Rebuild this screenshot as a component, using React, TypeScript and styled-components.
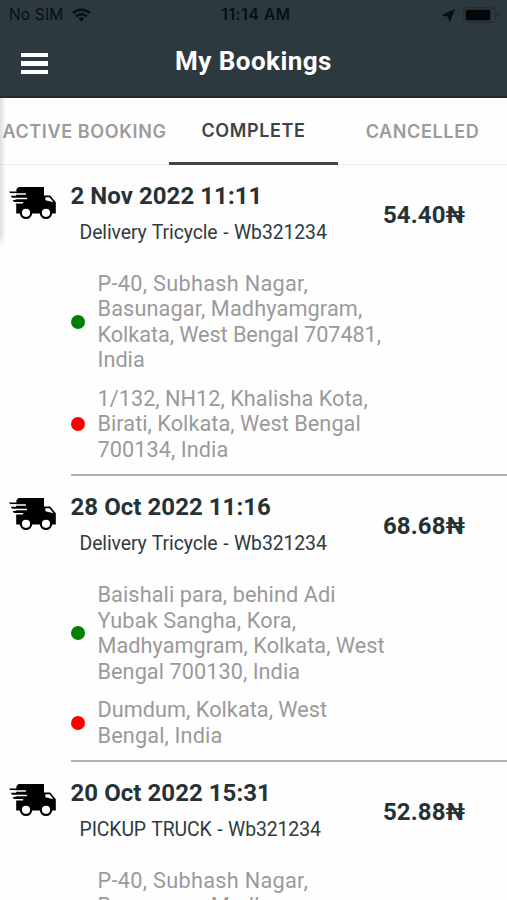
import React from "react";
import styled, { createGlobalStyle } from "styled-components";

const GlobalStyle = createGlobalStyle`
  * { box-sizing: border-box; }
  body { margin: 0; background: #fefefe; font-family: Roboto, "Liberation Sans", sans-serif; }
`;

const Screen = styled.main`
  position: relative;
  width: 507px;
  height: 900px;
  overflow: hidden;
  display: flex;
  flex-direction: column;
  background: #fefefe;
`;

const Header = styled.header`
  height: 98px;
  flex: none;
  background: #2c393f;
  border-bottom: 2px solid #1d2b2e;
`;

const StatusBar = styled.div`
  height: 30px;
  display: grid;
  grid-template-columns: 1fr auto 1fr;
  align-items: center;
  padding: 0 7px 0 9px;
  font-family: Inter, sans-serif;
  font-size: 15.5px;
  line-height: 30px;
  color: #071013;
`;

const Carrier = styled.div`
  display: flex;
  align-items: center;
  gap: 9px;
  letter-spacing: 0.15px;
`;

const Clock = styled.div`
  padding-left: 3px;
  font-weight: 600;
  letter-spacing: 0.65px;
`;

const Indicators = styled.div`
  display: flex;
  align-items: center;
  justify-content: flex-end;
  gap: 8px;
`;

const TitleBar = styled.div`
  height: 66px;
  display: grid;
  grid-template-columns: 1fr auto 1fr;
  align-items: center;
  padding: 0 21px;
`;

const MenuButton = styled.button`
  display: flex;
  flex-direction: column;
  gap: 4px;
  width: 27px;
  padding: 0;
  margin-top: 1px;
  border: 0;
  background: none;
`;

const MenuBar = styled.span`
  height: 4.4px;
  background: #fff;
`;

const Title = styled.h1`
  margin: -5px 0 0;
  font-size: 26px;
  line-height: 32px;
  font-weight: 700;
  color: #fff;
  letter-spacing: 0.45px;
`;

const Tabs = styled.nav`
  height: 67px;
  flex: none;
  display: grid;
  grid-template-columns: repeat(3, 169px);
  border-bottom: 1px solid #f0f0f0;
`;

const Tab = styled.button<{ $active?: boolean }>`
  height: 67px;
  padding: 0;
  padding-top: ${(p) => (p.$active ? "1px" : "2px")};
  border: 0;
  border-bottom: 3px solid ${(p) => (p.$active ? "#404446" : "transparent")};
  background: none;
  font-family: Inter, sans-serif;
  font-size: 18px;
  font-weight: 600;
  letter-spacing: 0.63px;
  white-space: nowrap;
  color: ${(p) => (p.$active ? "#404345" : "#9b9b9b")};
`;

const List = styled.section`
  display: flex;
  flex-direction: column;
`;

const Booking = styled.article`
  display: grid;
  flex: none;
  grid-template-columns: 70.5px 1fr;
`;

const IconCell = styled.div`
  padding: 21.5px 0 0 9px;
  svg { display: block; }
`;

const Details = styled.div`
  padding-bottom: 12px;
  border-bottom: 2px solid #afb1b1;
`;

const Summary = styled.div`
  display: flex;
  height: 105.8px;
`;

const Vehicle = styled.div`
  width: 312.5px;
  padding-top: 17px;
`;

const DateText = styled.h2`
  margin: 0;
  font-size: 24px;
  line-height: 28px;
  font-weight: 700;
  letter-spacing: 0.05px;
  color: #253236;
`;

const VehicleName = styled.div`
  margin: 11px 0 0 9px;
  font-size: 19.4px;
  line-height: 24px;
  letter-spacing: -0.1px;
  word-spacing: 0.9px;
  color: #2f3b3f;
`;

const Price = styled.div`
  padding-top: 36px;
  font-size: 24px;
  line-height: 28px;
  font-weight: 700;
  letter-spacing: 0.1px;
  color: #253236;
`;

const Stop = styled.div`
  display: flex;
  align-items: center;
  gap: 13px;
  & + & { margin-top: 13px; }
`;

const Dot = styled.span<{ $color: string }>`
  flex: none;
  width: 14px;
  height: 14px;
  border-radius: 50%;
  background: ${(p) => p.$color};
`;

const Address = styled.div`
  font-size: 21.7px;
  line-height: 25.5px;
  color: #9a9a9a;
`;

const Line = styled.div<{ $tracking: number }>`
  white-space: nowrap;
  letter-spacing: ${(p) => p.$tracking}px;
`;

const EdgeShadow = styled.div`
  position: absolute;
  left: 0;
  top: 98px;
  width: 6px;
  height: 150px;
  background: linear-gradient(to right, rgba(0, 0, 0, 0.12), transparent);
  mask-image: linear-gradient(#000 92%, transparent);
`;

function WifiIcon() {
  return (
    <svg width="19" height="14" viewBox="0 0 19 14" fill="none" stroke="#071013" strokeWidth="2.5">
      <path d="M1 5.1a12.2 12.2 0 0 1 17 0" />
      <path d="M4.2 8.5a7.6 7.6 0 0 1 10.6 0" />
      <path d="M6.6 10.7a4.2 4.2 0 0 1 5.8 0L9.5 13.6z" fill="#071013" stroke="none" />
    </svg>
  );
}

function LocationIcon() {
  return (
    <svg width="13" height="13" viewBox="0 0 13 13">
      <path d="M12.5.5 7.6 12.7 6.4 7.2.3 6.3z" fill="#071013" stroke="#071013" strokeWidth=".7" strokeLinejoin="round" />
    </svg>
  );
}

function BatteryIcon() {
  return (
    <svg width="37" height="16" viewBox="0 0 37 16">
      <rect x=".7" y=".7" width="31.6" height="14.6" rx="4" fill="none" stroke="#1f2c30" strokeWidth="1" />
      <rect x="2.8" y="2.8" width="24.6" height="10.4" rx="1.6" fill="#020708" />
      <path d="M34 5.4c1.9.8 1.9 4.4 0 5.2z" fill="#1f2c30" />
    </svg>
  );
}

function TruckIcon() {
  return (
    <svg width="48" height="33" viewBox="0 0 48 33">
      <path
        d="M9.5 0H35v8.6h6.2l5.6 6.6v11.3H7.2V16.5L4.8 14.8 3.6 13h4L2.8 10.6 1.8 8.8h5.4V6.3H1.4L0 4.5h7.4V2.2z"
        fill="#000"
      />
      <path d="M1.6 7.1H16.4M3 11.6H17.4M5 15.8H13.6" stroke="#fefefe" strokeWidth="1.5" strokeLinecap="round" />
      <path d="M36.4 10.3h4.1l4 5-8.1-2.1z" fill="#fefefe" />
      <circle cx="17" cy="25.8" r="5.2" fill="#fefefe" stroke="#000" strokeWidth="2.2" />
      <circle cx="37" cy="25.8" r="5.2" fill="#fefefe" stroke="#000" strokeWidth="2.2" />
    </svg>
  );
}

type AddressLine = [text: string, tracking: number];

interface BookingData {
  date: string;
  vehicle: string;
  price: string;
  from: AddressLine[];
  to: AddressLine[];
}

const home: AddressLine[] = [
  ["P-40, Subhash Nagar,", 0.3],
  ["Basunagar, Madhyamgram,", 0.13],
  ["Kolkata, West Bengal 707481,", -0.07],
  ["India", 0],
];

const bookings: BookingData[] = [
  {
    date: "2 Nov 2022 11:11",
    vehicle: "Delivery Tricycle - Wb321234",
    price: "54.40₦",
    from: home,
    to: [
      ["1/132, NH12, Khalisha Kota,", 0.03],
      ["Birati, Kolkata, West Bengal", 0.04],
      ["700134, India", 0.06],
    ],
  },
  {
    date: "28 Oct 2022 11:16",
    vehicle: "Delivery Tricycle - Wb321234",
    price: "68.68₦",
    from: [
      ["Baishali para, behind Adi", 0.09],
      ["Yubak Sangha, Kora,", 0.15],
      ["Madhyamgram, Kolkata, West", 0.03],
      ["Bengal 700130, India", 0.05],
    ],
    to: [
      ["Dumdum, Kolkata, West", 0.03],
      ["Bengal, India", 0.14],
    ],
  },
  {
    date: "20 Oct 2022 15:31",
    vehicle: "PICKUP TRUCK - Wb321234",
    price: "52.88₦",
    from: home,
    to: [],
  },
];

function StopRow({ color, lines }: { color: string; lines: AddressLine[] }) {
  return (
    <Stop>
      <Dot $color={color} />
      <Address>
        {lines.map(([text, tracking]) => (
          <Line key={text} $tracking={tracking}>
            {text}
          </Line>
        ))}
      </Address>
    </Stop>
  );
}

export default function App() {
  return (
    <>
      <GlobalStyle />
      <Screen>
        <Header>
          <StatusBar>
            <Carrier>
              <span>No SIM</span>
              <WifiIcon />
            </Carrier>
            <Clock>11:14 AM</Clock>
            <Indicators>
              <LocationIcon />
              <BatteryIcon />
            </Indicators>
          </StatusBar>
          <TitleBar>
            <MenuButton aria-label="Menu">
              <MenuBar />
              <MenuBar />
              <MenuBar />
            </MenuButton>
            <Title>My Bookings</Title>
          </TitleBar>
        </Header>
        <Tabs>
          <Tab>ACTIVE BOOKING</Tab>
          <Tab $active>COMPLETE</Tab>
          <Tab>CANCELLED</Tab>
        </Tabs>
        <List>
          {bookings.map((b) => (
            <Booking key={b.date}>
              <IconCell>
                <TruckIcon />
              </IconCell>
              <Details>
                <Summary>
                  <Vehicle>
                    <DateText>{b.date}</DateText>
                    <VehicleName>{b.vehicle}</VehicleName>
                  </Vehicle>
                  <Price>{b.price}</Price>
                </Summary>
                <StopRow color="#008000" lines={b.from} />
                {b.to.length > 0 && <StopRow color="#ff0000" lines={b.to} />}
              </Details>
            </Booking>
          ))}
        </List>
        <EdgeShadow />
      </Screen>
    </>
  );
}
